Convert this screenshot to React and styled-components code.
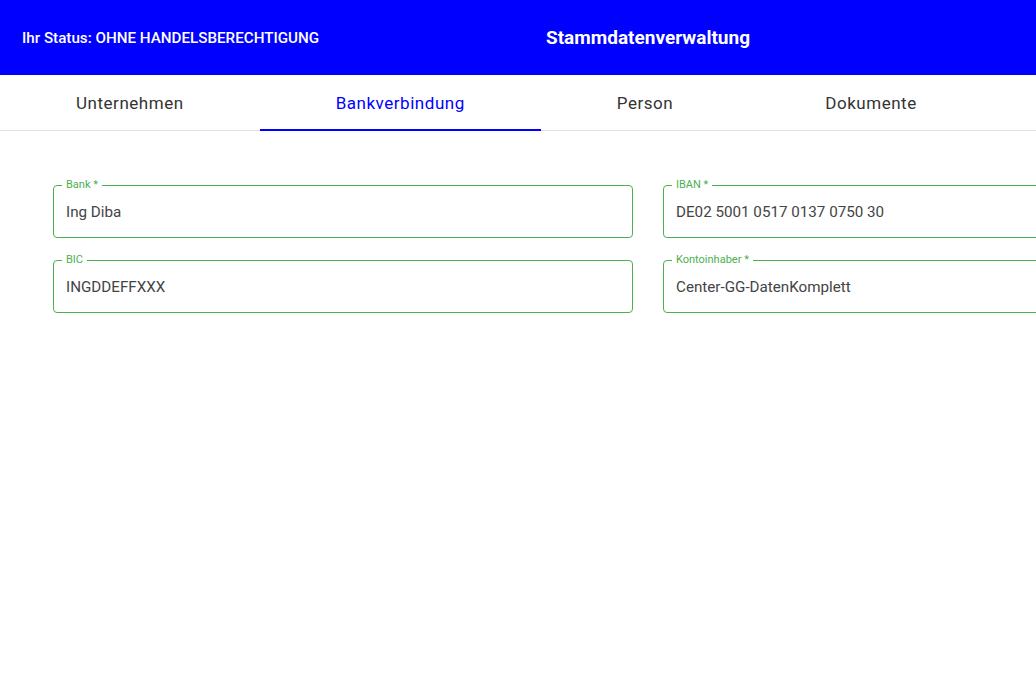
import styled, { createGlobalStyle } from "styled-components"

const GlobalStyle = createGlobalStyle`
  html, body {
    margin: 0;
    overflow: hidden;
    background: #fff;
    font-family: Roboto, "Liberation Sans", sans-serif;
  }
`

const Page = styled.div`
  width: 1296px;
`

const Header = styled.header`
  height: 75px;
  background: #0000ff;
  color: #fff;
  display: grid;
  grid-template-columns: 1fr auto 1fr;
  align-items: center;
  padding: 0 22px;
  box-sizing: border-box;
`

const Status = styled.div`
  font-size: 15.2px;
  font-weight: 500;
`

const Title = styled.h1`
  margin: 0;
  font-size: 19px;
  font-weight: 700;
`

const TabBar = styled.nav`
  display: flex;
  height: 56px;
  border-bottom: 1px solid #e0e0e0;
  box-sizing: border-box;
`

const Tab = styled.div`
  padding: 1px 76px 0;
  display: flex;
  align-items: center;
  justify-content: center;
  font-size: 17px;
  letter-spacing: 0.53px;
  color: ${p => (p.$active ? "#0000ff" : "#333")};
  border-bottom: 2px solid ${p => (p.$active ? "#0000ff" : "transparent")};
  margin-bottom: -1px;
`

const Form = styled.div`
  display: grid;
  grid-template-columns: 580px 580px;
  column-gap: 30px;
  row-gap: 15px;
  padding: 47px 53px;
`

const Field = styled.fieldset`
  margin: 0;
  padding: 0 8px;
  border: 1px solid #4caf50;
  border-radius: 4px;
  height: 60px;
  box-sizing: border-box;
`

const Label = styled.legend`
  padding: 0 4px;
  font-size: 11px;
  color: #4caf50;
  line-height: 14px;
`

const Value = styled.div`
  padding: 0 4px;
  font-size: 15.2px;
  color: #444;
  line-height: 20px;
  margin-top: 10px;
`

const tabs = ["Unternehmen", "Bankverbindung", "Person", "Dokumente"]

const fields = [
  { label: "Bank *", value: "Ing Diba" },
  { label: "IBAN *", value: "DE02 5001 0517 0137 0750 30" },
  { label: "BIC", value: "INGDDEFFXXX" },
  { label: "Kontoinhaber *", value: "Center-GG-DatenKomplett" },
]

export default function App() {
  return (
    <Page>
      <GlobalStyle />
      <Header>
        <Status>Ihr Status: OHNE HANDELSBERECHTIGUNG</Status>
        <Title>Stammdatenverwaltung</Title>
        <div />
      </Header>
      <TabBar>
        {tabs.map(t => (
          <Tab key={t} $active={t === "Bankverbindung"}>{t}</Tab>
        ))}
      </TabBar>
      <Form>
        {fields.map(f => (
          <Field key={f.label}>
            <Label>{f.label}</Label>
            <Value>{f.value}</Value>
          </Field>
        ))}
      </Form>
    </Page>
  )
}
